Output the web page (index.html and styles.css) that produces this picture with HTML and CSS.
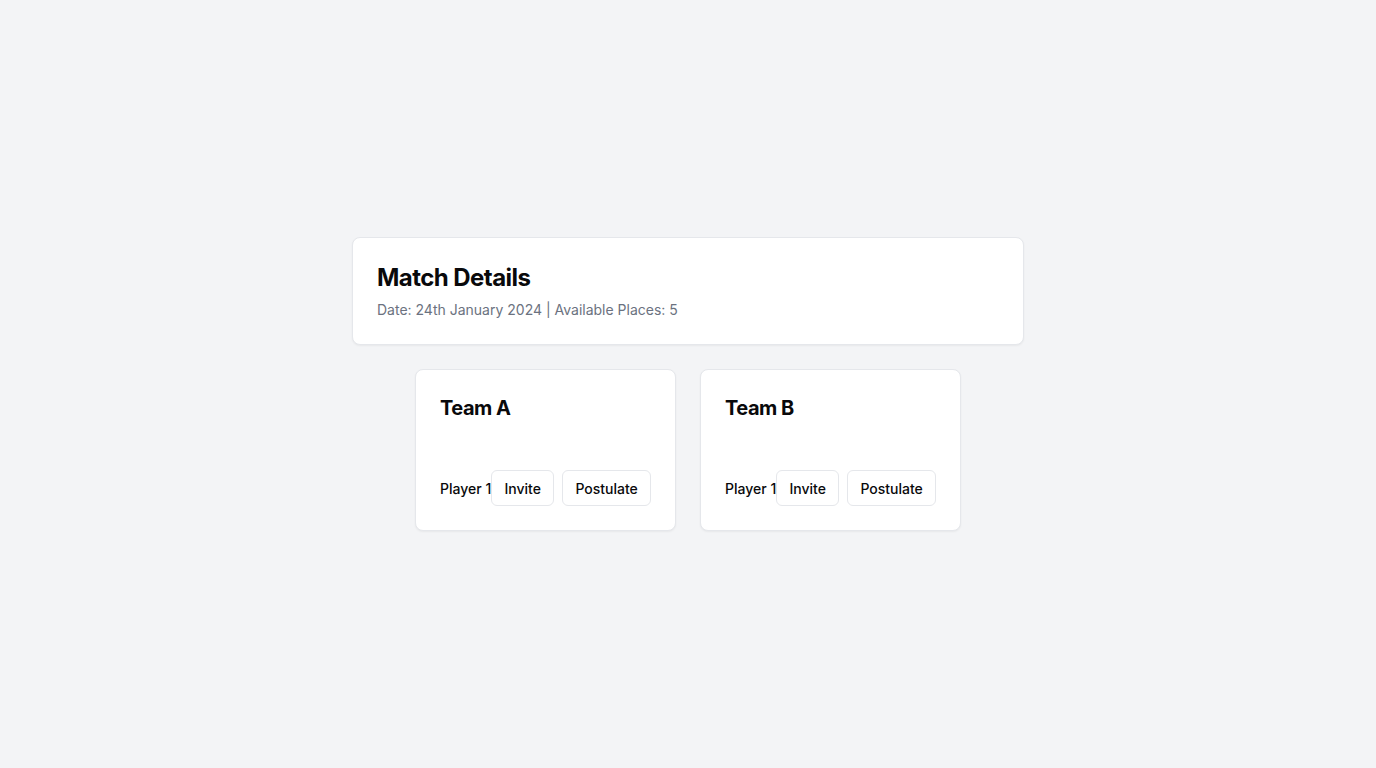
FILE: index.html
```html
<!DOCTYPE html>
<html lang="en">
<head>
<meta charset="utf-8">
<title>Match Details</title>
<link rel="stylesheet" href="styles.css">
</head>
<body>
<main class="page">
  <div class="wrap">
    <section class="card match">
      <h1 class="match-title">Match Details</h1>
      <p class="match-sub">Date: 24th January 2024 | Available Places: 5</p>
    </section>
    <div class="teams">
      <section class="card team">
        <h2 class="team-title">Team A</h2>
        <div class="player-row">
          <span class="player">Player 1</span>
          <button class="btn">Invite</button>
          <button class="btn">Postulate</button>
        </div>
      </section>
      <section class="card team">
        <h2 class="team-title">Team B</h2>
        <div class="player-row">
          <span class="player">Player 1</span>
          <button class="btn">Invite</button>
          <button class="btn">Postulate</button>
        </div>
      </section>
    </div>
  </div>
</main>
</body>
</html>
```

FILE: styles.css
```css
* { box-sizing: border-box; }
html, body { margin: 0; padding: 0; }
body {
  background: #f3f4f6;
  font-family: Inter, "Noto Sans", sans-serif;
  color: #09090b;
}
.page {
  min-height: 768px;
  display: flex;
  align-items: center;
  justify-content: center;
}
.wrap {
  width: 672px;
  display: flex;
  flex-direction: column;
  gap: 24px;
}
.card {
  background: #fff;
  border: 1px solid #e5e7eb;
  border-radius: 8px;
  box-shadow: 0 1px 2px rgba(0,0,0,0.05);
  padding: 24px;
}
.match-title {
  margin: 0;
  font-size: 24px;
  line-height: 32px;
  font-weight: 700;
  letter-spacing: -0.55px;
}
.match-sub {
  margin: 6px 0 0;
  font-size: 14px;
  line-height: 20px;
  color: #6b7280;
}
.teams {
  display: flex;
  justify-content: center;
  gap: 24px;
}
.team { width: 261px; }
.team-title {
  margin: 0;
  font-size: 20px;
  line-height: 28px;
  font-weight: 700;
  letter-spacing: -0.5px;
}
.player-row {
  margin-top: 48px;
  display: flex;
  align-items: center;
  white-space: nowrap;
}
.player {
  flex-shrink: 0;
  font-size: 14px;
  font-weight: 500;
}
.btn {
  flex-shrink: 0;
  height: 36px;
  padding: 0 12.25px;
  margin-right: 8px;
  border: 1px solid #e5e7eb;
  border-radius: 6px;
  background: #fff;
  font-family: inherit;
  font-size: 14px;
  font-weight: 500;
  color: #09090b;
}
.btn:last-child { margin-right: 0; }
```
